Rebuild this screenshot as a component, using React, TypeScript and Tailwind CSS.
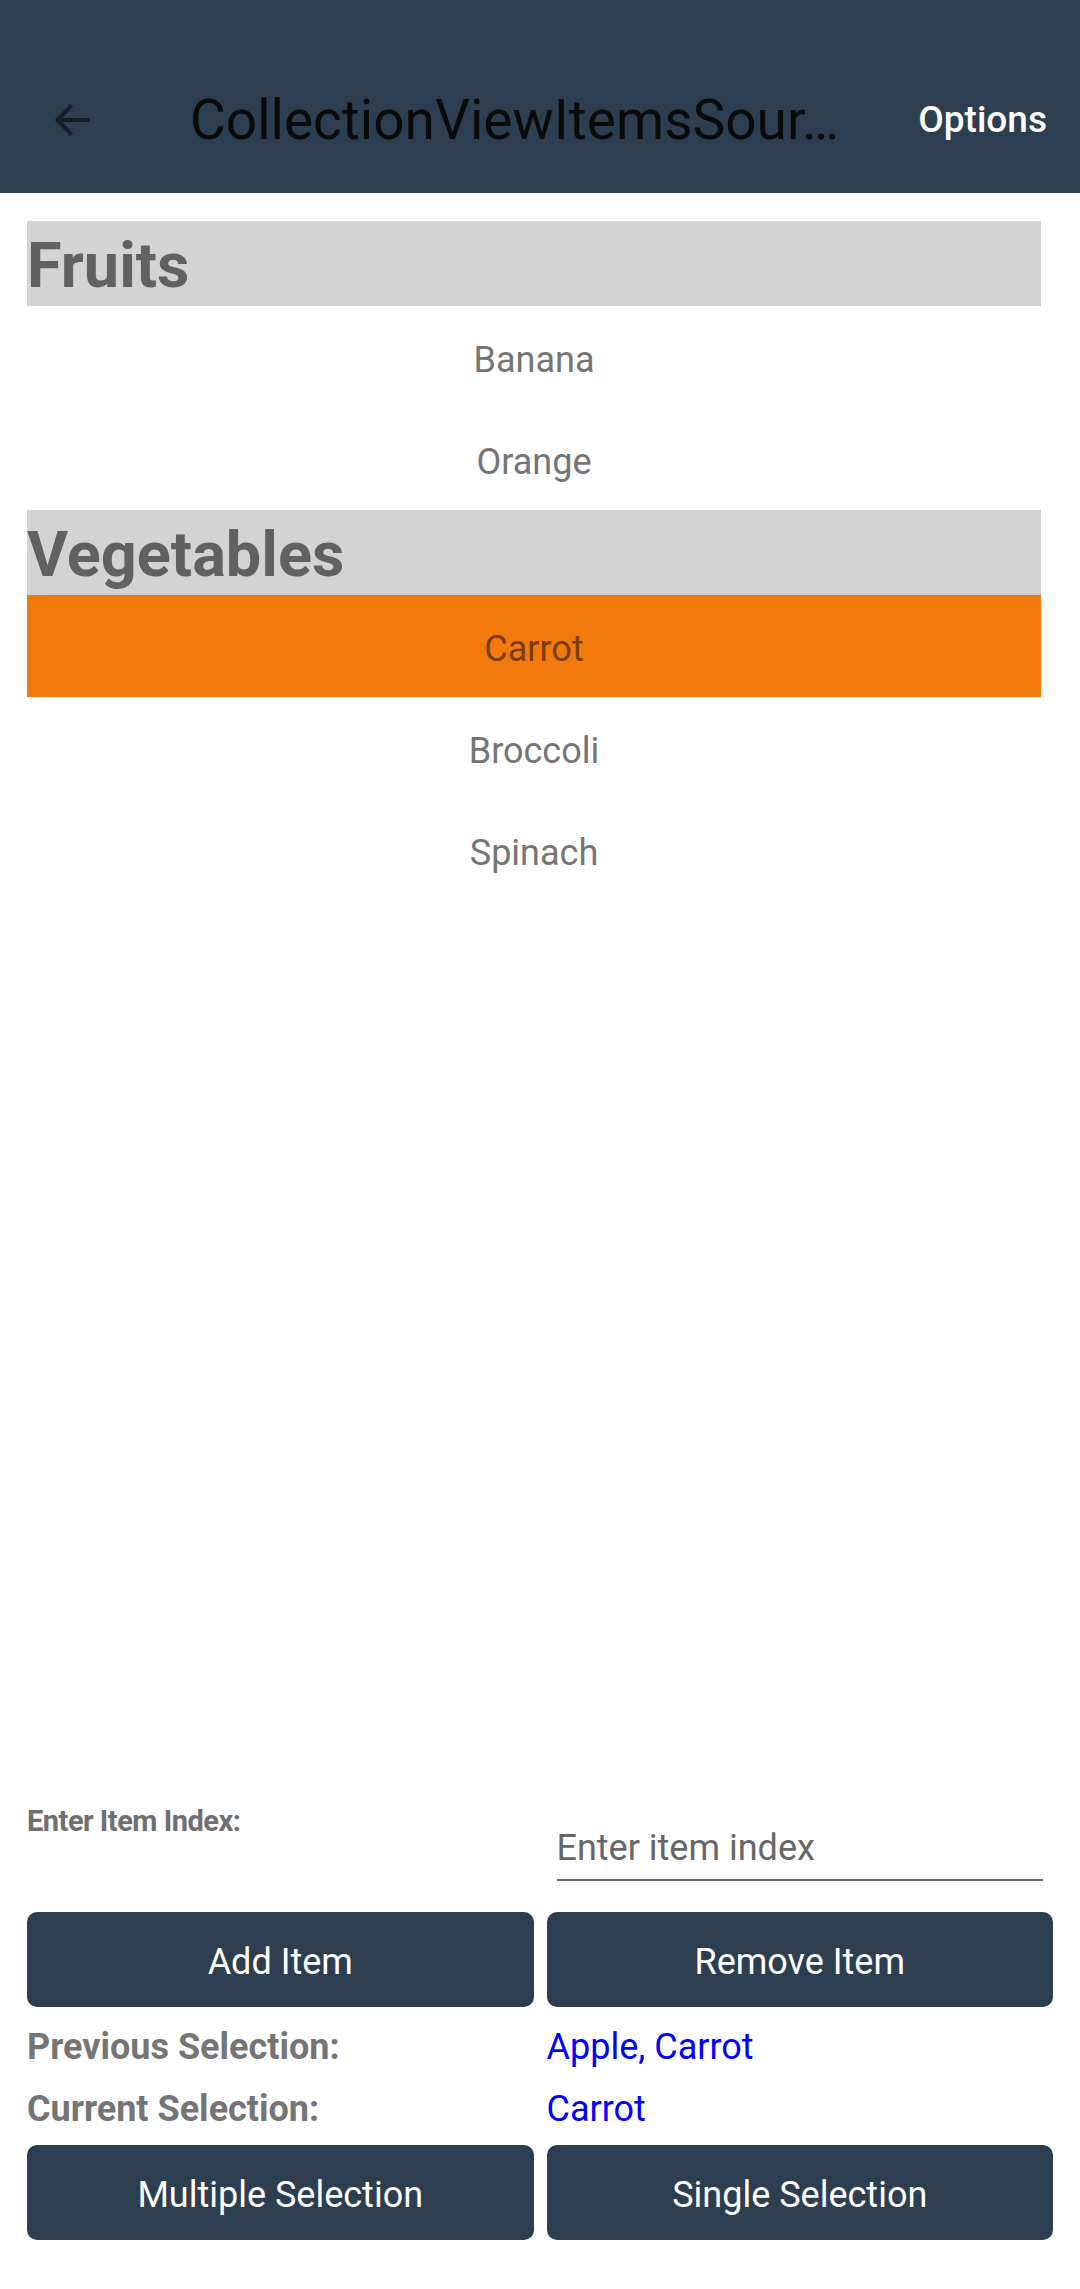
const fruits = ['Banana', 'Orange'];
const vegetables = ['Carrot', 'Broccoli', 'Spinach'];
const selected = 'Carrot';

function GroupHeader({ title }: { title: string }) {
  return (
    <div className="h-[85px] bg-[#d3d3d3] pt-[14px]">
      <span className="block text-[63px] leading-[62px] font-bold text-[#616161]">{title}</span>
    </div>
  );
}

function Item({ name }: { name: string }) {
  const isSelected = name === selected;
  return (
    <div
      className={`h-[102px] pt-[5px] flex items-center justify-center text-[36px] ${
        isSelected ? 'bg-[#f27a0c] text-[#7a3d05]' : 'bg-white text-[#757575]'
      }`}
    >
      {name}
    </div>
  );
}

function ActionButton({ label }: { label: string }) {
  return (
    <button className="h-[95px] pt-[4px] rounded-[10px] bg-[#2d3e50] text-white text-[36px] flex items-center justify-center">
      {label}
    </button>
  );
}

export default function App() {
  return (
    <div className="w-[1080px] h-[2289px] flex flex-col bg-white font-['Roboto',sans-serif]">
      {/* toolbar */}
      <div className="h-[193px] shrink-0 bg-[#2d3e50] flex items-end pb-[43px]">
        <div className="w-[190px] shrink-0 pl-[51px] flex items-center h-[60px]">
          <svg width="42" height="42" viewBox="0 0 24 24" fill="none" stroke="#151d26" strokeWidth="2.3" strokeLinecap="square">
            <path d="M21 12H4" />
            <path d="M11 4.5L3.8 12l7.2 7.5" />
          </svg>
        </div>
        <div className="w-[680px] shrink-0 text-[55px] leading-[60px] text-[#0a0a0a] whitespace-nowrap">
          CollectionViewItemsSour…
        </div>
        <div className="flex-1 flex justify-end pr-[33px] h-[60px] items-center">
          <span className="text-[37px] font-medium text-white">Options</span>
        </div>
      </div>

      <div className="flex-1 flex flex-col px-[27px] pt-[28px]">
        {/* grouped list */}
        <div className="mr-[12px]">
          <GroupHeader title="Fruits" />
          {fruits.map((f) => (
            <Item key={f} name={f} />
          ))}
          <GroupHeader title="Vegetables" />
          {vegetables.map((v) => (
            <Item key={v} name={v} />
          ))}
        </div>

        <div className="flex-1" />

        {/* controls */}
        <div className="pb-[49px]">
          <div className="grid grid-cols-2 gap-[13px]">
            <div className="text-[29px] font-bold text-[#6f6f6f] tracking-[-0.5px]">Enter Item Index:</div>
            <div className="px-[10px] pt-[27px]">
              <div className="text-[36px] leading-[42px] text-[#666666]">Enter item index</div>
              <div className="mt-[10px] h-[2px] bg-[#6f6f6f]" />
            </div>
          </div>

          <div className="mt-[31px] grid grid-cols-2 gap-[13px]">
            <ActionButton label="Add Item" />
            <ActionButton label="Remove Item" />
          </div>

          <div className="mt-[20px] grid grid-cols-2 gap-[13px] text-[36px] leading-[40px]">
            <div className="font-bold text-[#757575]">Previous Selection:</div>
            <div className="text-[#0000ff]">Apple, Carrot</div>
          </div>
          <div className="mt-[22px] grid grid-cols-2 gap-[13px] text-[36px] leading-[40px]">
            <div className="font-bold text-[#757575]">Current Selection:</div>
            <div className="text-[#0000ff]">Carrot</div>
          </div>

          <div className="mt-[16px] grid grid-cols-2 gap-[13px]">
            <ActionButton label="Multiple Selection" />
            <ActionButton label="Single Selection" />
          </div>
        </div>
      </div>
    </div>
  );
}
